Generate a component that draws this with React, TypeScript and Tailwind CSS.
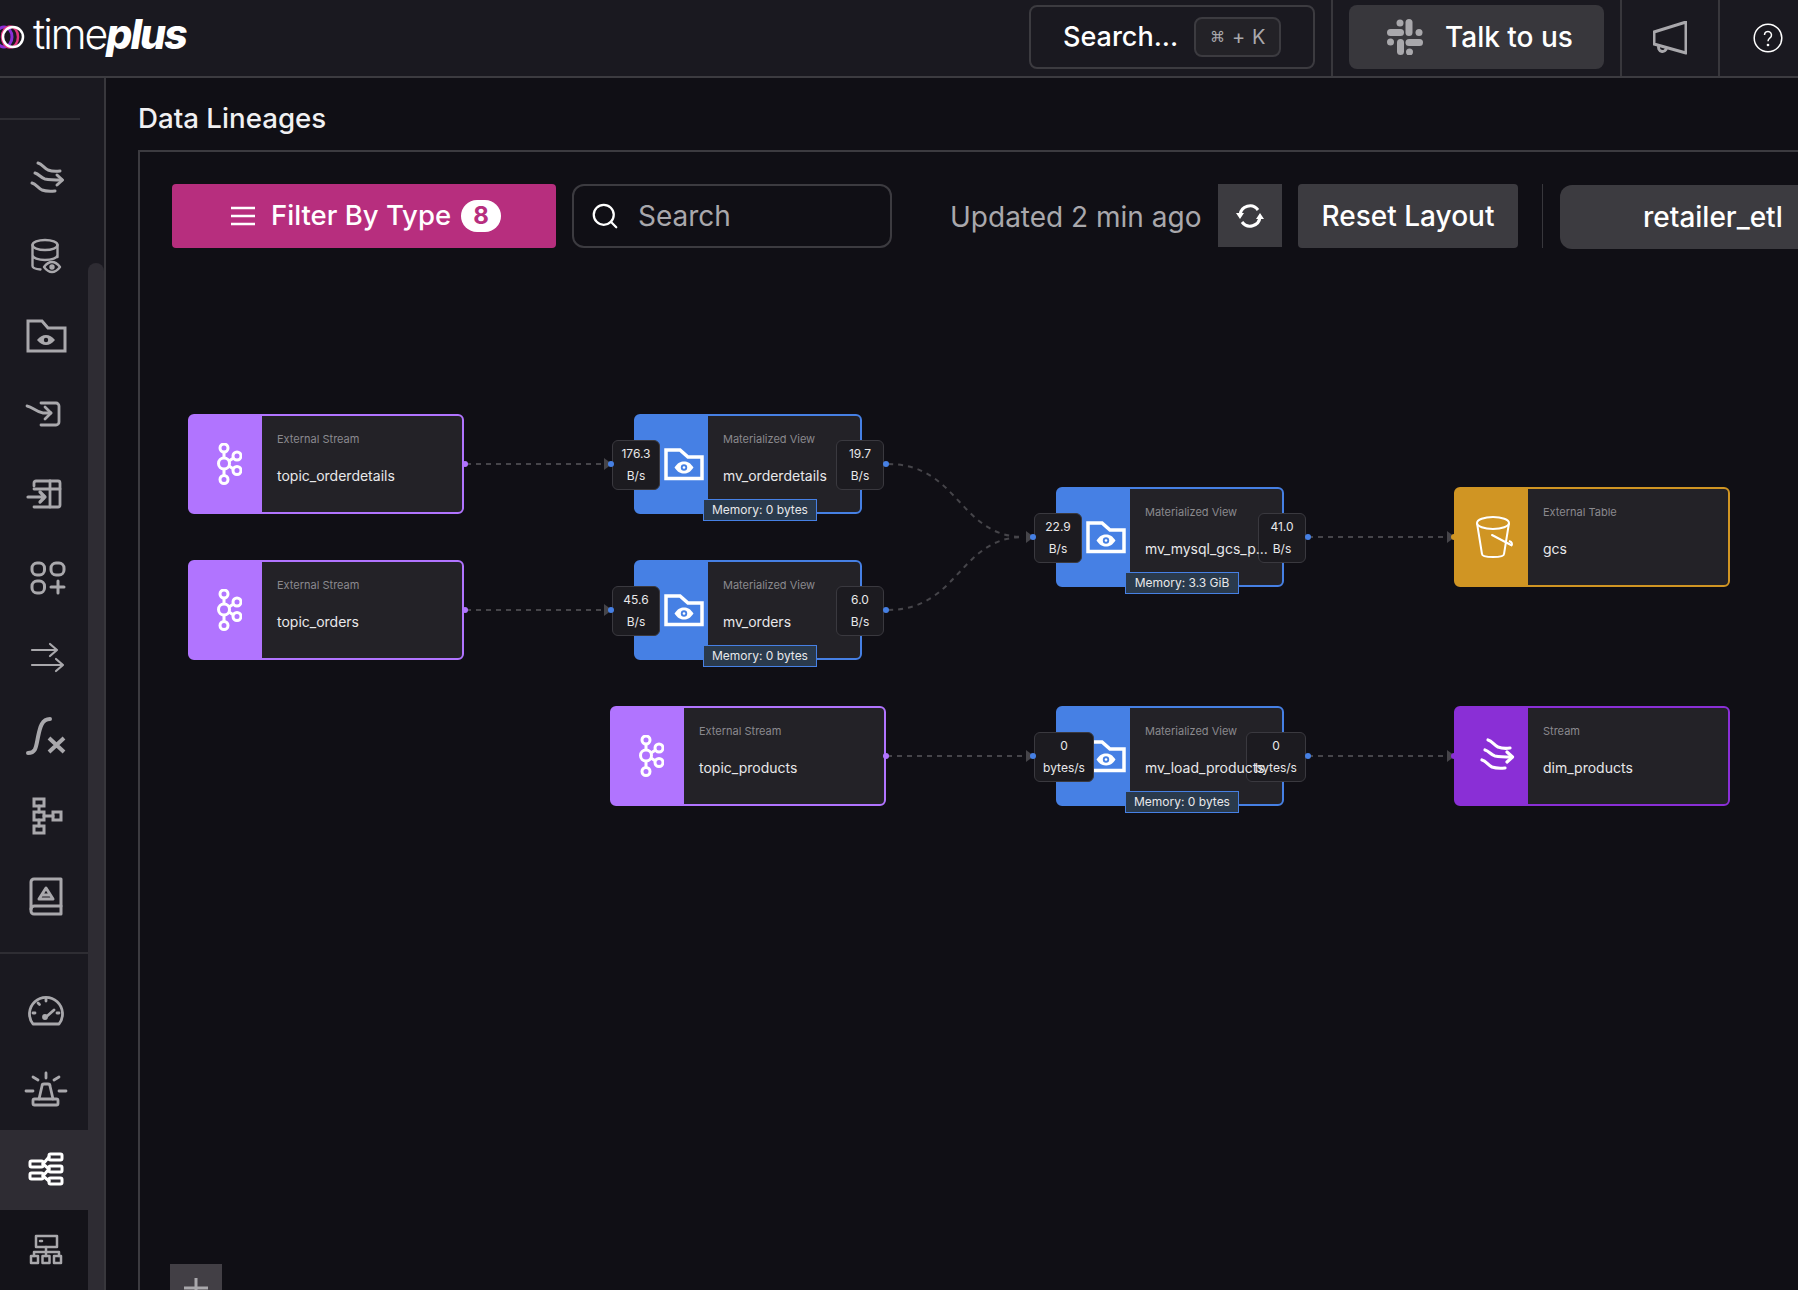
import React from "react";
import { Search } from "lucide-react";

const G = "#a9a8ac";

function SideIcon({ children, color = G, sw = 2.8 }: { children: React.ReactNode; color?: string; sw?: number }) {
  return (
    <svg width="44" height="44" viewBox="0 0 44 44" fill="none" stroke={color} strokeWidth={sw} strokeLinecap="round" strokeLinejoin="round">
      {children}
    </svg>
  );
}

const StreamPaths = () => (
  <>
    <path d="M14 7c4 1 6 5 10 7 4 1.500 8 1.500 12 1" />
    <path d="M11 17c4 1 6 5 10 6 5 1 10 1 17 1" />
    <path d="M33 19l5.500 5-5.500 5" />
    <path d="M8 27c4 1 6 5 10 7 4 1.500 8 1.500 13 1" />
  </>
);

const sideTop: React.ReactNode[] = [
  <SideIcon sw={3}><StreamPaths /></SideIcon>,
  <SideIcon sw={2.4}>
    <ellipse cx="21" cy="9" rx="12.500" ry="5" />
    <path d="M8.500 9v21c0 2 3 3 8 3.500M33.500 9v12M8.500 19c0 3 6 5 12.500 5s12.500-2 12.500-5" />
    <path d="M20 31c3-4 5.500-5 8-5s5 1 8 5c-3 4-5.500 5-8 5s-5-1-8-5z" />
    <circle cx="28" cy="31" r="1.500" fill={G} />
  </SideIcon>,
  <SideIcon sw={3}>
    <path d="M4 5h14l6 7h17v23H4z" strokeLinejoin="miter" />
    <path d="M13 24c3-3.500 5.500-5 9-5s6 1.500 9 5c-3 3.500-5.500 5-9 5s-6-1.500-9-5z" fill={G} stroke="none" />
    <circle cx="22" cy="24" r="2.200" fill="#1a1920" stroke="none" />
  </SideIcon>,
  <SideIcon>
    <path d="M3 10c6 1 9 6 16 7h8" />
    <path d="M21 11l6 6-6 6" />
    <path d="M17 7h15a3 3 0 0 1 3 3v16a3 3 0 0 1-3 3H17" />
  </SideIcon>,
  <SideIcon>
    <path d="M10 10V7a2 2 0 0 1 2-2h22a2 2 0 0 1 2 2v22a2 2 0 0 1-2 2H10" />
    <path d="M26 5v26M10 13h26" />
    <path d="M4 21h17M16 16l5 5-5 5" strokeWidth="3.200" />
  </SideIcon>,
  <SideIcon sw={3}>
    <rect x="8" y="7" width="12.500" height="12" rx="5" />
    <rect x="27" y="7" width="13" height="12" rx="5" />
    <rect x="8" y="25" width="12.500" height="12" rx="5" />
    <path d="M34 25v12M27 31h13" />
  </SideIcon>,
  <SideIcon sw={2.2}>
    <path d="M8 14h25M26 8l7 6-7 6" />
    <path d="M8 29h31M32 23l7 6-7 6" />
  </SideIcon>,
  <SideIcon sw={4}>
    <path d="M4 37c8 0 8-6 10-16s4-18 12-18" />
    <path d="M25 22l15 14M40 22L25 36" strokeLinecap="butt" />
  </SideIcon>,
  <SideIcon sw={3}>
    <rect x="10" y="3" width="10" height="7" strokeLinejoin="miter" />
    <rect x="10" y="16" width="10" height="8" strokeLinejoin="miter" />
    <rect x="10" y="30" width="10" height="7" strokeLinejoin="miter" />
    <rect x="29" y="16" width="8" height="8" strokeLinejoin="miter" />
    <path d="M15 10v6M15 24v6M20 20h9" />
  </SideIcon>,
  <SideIcon sw={3}>
    <path d="M10 3h27v35H10a3 3 0 0 1-3-3V6a3 3 0 0 1 3-3z" />
    <path d="M7 33a3.500 3.500 0 0 1 3.500-3H37" />
    <path d="M15 23l7-11 7 11zM18 19h8" />
  </SideIcon>,
];

const sideBottom: React.ReactNode[] = [
  <SideIcon>
    <path d="M9 36a16.500 16.500 0 1 1 26 0z" />
    <path d="M22 29l8-7" />
    <circle cx="21" cy="29" r="1.500" fill={G} />
    <path d="M9 25h2M33 25h2M14 15l1.500 1.500M22 11v2" />
  </SideIcon>,
  <SideIcon>
    <path d="M22 5v5M9 9l5 3M35 9l-5 3M2 23h7M35 23h7" />
    <path d="M15 31l3-13a2 2 0 0 1 2-2h4a2 2 0 0 1 2 2l3 13" />
    <rect x="9" y="31" width="25" height="6" rx="1.500" />
  </SideIcon>,
  <SideIcon color="#fff" sw={3}>
    <rect x="25" y="6" width="13" height="6" rx="1.500" />
    <rect x="25" y="18" width="13" height="6" rx="1.500" />
    <rect x="25" y="30" width="13" height="6" rx="1.500" />
    <rect x="6" y="13" width="13" height="6" rx="1.500" />
    <rect x="6" y="25" width="13" height="6" rx="1.500" />
    <path d="M19 16l6-7M19 16l6 5M19 28l6-7M19 28l6 5" />
  </SideIcon>,
  <SideIcon sw={2.500}>
    <rect x="12" y="8" width="21" height="11" />
    <path d="M22 19v5M10 28v-4h25v4M22 24v4" />
    <rect x="7" y="28" width="7" height="7" />
    <rect x="18.500" y="28" width="7" height="7" />
    <rect x="30" y="28" width="7" height="7" />
    <path d="M16 13h2" />
  </SideIcon>,
];

function Sidebar() {
  return (
    <aside className="relative flex w-[106px] shrink-0 flex-col overflow-hidden border-r-2 border-[#38373c] bg-[#1a1920] pt-10">
      <div className="mb-[18px] mr-[24px] h-[2px] shrink-0 bg-[#2e2d33]" />
      <div className="flex w-[88px] flex-col">
        {sideTop.map((ic, i) => (
          <div key={i} className="flex h-20 shrink-0 items-center justify-center pl-1">{ic}</div>
        ))}
      </div>
      <div className="mb-4 mt-[14px] mr-[16px] h-[2px] shrink-0 bg-[#2e2d33]" />
      <div className="flex w-[88px] flex-col">
        {sideBottom.map((ic, i) => (
          <div key={i} className={`flex h-20 shrink-0 items-center justify-center pl-1 ${i === 2 ? "bg-[#2e2c33]" : i === 3 ? "bg-[#141319]" : ""}`}>{ic}</div>
        ))}
      </div>
      <div className="absolute bottom-0 left-[88px] top-[185px] w-4 rounded-t-lg bg-[#2e2c33]" />
    </aside>
  );
}

function Header() {
  return (
    <header className="flex h-[78px] shrink-0 items-stretch border-b-2 border-[#3c3b40] bg-[#1a1920]">
      <div className="flex items-start pt-[2px]">
        <svg width="26" height="40" viewBox="0 0 26 40" fill="none" className="mt-[15px] shrink-0">
          <ellipse cx="4" cy="20" rx="8" ry="10" stroke="#8a2fd6" strokeWidth="3" />
          <ellipse cx="10" cy="20" rx="8" ry="10.500" stroke="#e0347f" strokeWidth="2.500" />
          <circle cx="13" cy="20" r="10" stroke="#fff" strokeWidth="2.500" />
        </svg>
        <div className="ml-[7px] flex font-[Inter,sans-serif] text-[41px] leading-[64px] text-white">
          <span className="font-light tracking-[-2px]">time</span>
          <span className="font-extrabold italic tracking-[-2px]">plus</span>
        </div>
      </div>
      <div className="ml-auto flex items-stretch">
        <div className="border-r-2 border-[#38373c] pr-4 pt-[5px]">
          <div className="flex h-16 w-[286px] items-center rounded-lg border-2 border-[#3c3b40] pl-[32px]">
            <span className="text-[27px] font-medium text-white">Search...</span>
            <span className="ml-4 flex h-10 w-[87px] items-center justify-center gap-[7px] rounded-lg border-2 border-[#3c3b40] bg-[#232227] text-[20px] text-[#a9a8ac]">
              <span className="font-['DejaVu_Sans'] text-[15px]">⌘</span><span>+</span><span>K</span>
            </span>
          </div>
        </div>
        <div className="border-r-2 border-[#38373c] px-4 pt-[5px]">
          <div className="flex h-16 w-[255px] items-center rounded-lg bg-[#38373c] pl-[38px]">
            <svg width="36" height="36" viewBox="0 0 36 36" fill={G} className="shrink-0">
              <circle cx="13" cy="4" r="3.500" />
              <rect x="18.500" y="0" width="7" height="17" rx="3.500" />
              <circle cx="32" cy="13.500" r="3.500" />
              <rect x="18.500" y="20" width="17.500" height="7" rx="3.500" />
              <circle cx="22.500" cy="33" r="3.500" />
              <rect x="10" y="20" width="7" height="16" rx="3.500" />
              <circle cx="3.500" cy="23" r="3.500" />
              <rect x="0" y="10" width="17" height="7" rx="3.500" />
            </svg>
            <span className="ml-[22px] text-[28px] font-medium text-white">Talk to us</span>
          </div>
        </div>
        <div className="flex w-[98px] items-center justify-center border-r-2 border-[#38373c]">
          <svg width="34" height="34" viewBox="0 0 34 34" fill="none" stroke={G} strokeWidth="3" strokeLinejoin="round">
            <path d="M1 11L33 1v31L1 23z" />
            <path d="M6 24.500a4 4 0 1 0 7.500 2" />
          </svg>
        </div>
        <div className="flex w-[78px] items-center justify-center pl-[18px]">
          <svg width="30" height="30" viewBox="0 0 30 30" fill="none" stroke="#fff" strokeWidth="1.500" className="shrink-0">
            <circle cx="15" cy="15" r="13.800" />
            <path d="M11.500 12a3.500 3.500 0 1 1 5.500 2.800c-1.300 1-2 1.700-2 3.400" />
            <circle cx="15" cy="22" r="0.600" fill="#fff" />
          </svg>
        </div>
      </div>
    </header>
  );
}

function Kafka() {
  return (
    <svg width="26" height="42" viewBox="0 0 26 42" fill="none" stroke="#fff" strokeWidth="3">
      <circle cx="8" cy="5" r="4" />
      <circle cx="8" cy="20.500" r="5.500" />
      <circle cx="8" cy="36.500" r="4" />
      <circle cx="21" cy="13" r="4" />
      <circle cx="21" cy="27.500" r="4" />
      <path d="M8 9v6M8 26v6.500M13 18l4.500-3M13 23l4.500 3" />
    </svg>
  );
}

function FolderEye() {
  return (
    <svg width="40" height="33" viewBox="0 0 40 33" fill="none" className="shrink-0">
      <path d="M2 2h14l8 7h14v21.500H2z" stroke="#fff" strokeWidth="3.500" />
      <path d="M10.500 19.500c3-4.500 6-6 9.500-6s6.500 1.500 9.500 6c-3 4.500-6 6-9.500 6s-6.500-1.500-9.500-6z" fill="#fff" />
      <circle cx="20" cy="19.500" r="3.200" fill="#4680e4" />
      <circle cx="20" cy="19.500" r="1.300" fill="#fff" />
    </svg>
  );
}

function Bucket() {
  return (
    <svg width="40" height="44" viewBox="0 0 40 44" fill="none" stroke="#fff" strokeWidth="2">
      <ellipse cx="18" cy="8" rx="16" ry="6" />
      <path d="M2 8l5 31c0 2 5 3 11 3s11-1 11-3l5-31" />
      <path d="M17 20l19 10" strokeLinecap="round" />
      <path d="M34 26c3 1 4 3 2 5" />
    </svg>
  );
}

function WhiteStream() {
  return (
    <svg width="38" height="38" viewBox="4 4 38 38" fill="none" stroke="#fff" strokeWidth="3.200" strokeLinecap="round" strokeLinejoin="round">
      <StreamPaths />
    </svg>
  );
}

function Badge({ top, bottom, side, wide }: { top: string; bottom: string; side: "l" | "r"; wide?: boolean }) {
  return (
    <div className={`absolute top-6 z-10 flex h-[50px] flex-col items-center justify-center rounded-md border border-[#3a393f] bg-[#1c1b20] text-[12px] leading-[22px] text-[#e8e8ea] ${wide ? "w-[60px]" : "w-[48px]"} ${side === "l" ? "left-[-24px]" : "right-[-24px]"}`}>
      <span>{top}</span>
      <span>{bottom}</span>
    </div>
  );
}

type NodeProps = {
  pos: string;
  w: string;
  border: string;
  panel: string;
  panelPad: string;
  icon: React.ReactNode;
  type: string;
  name: string;
  leftB?: [string, string];
  rightB?: [string, string];
  wide?: boolean;
  memory?: string;
  memPos?: string;
};

function Node({ pos, w, border, panel, panelPad, icon, type, name, leftB, rightB, wide, memory, memPos }: NodeProps) {
  return (
    <div className={`absolute flex h-[100px] rounded-md border-2 bg-[#232227] ${pos} ${w} ${border}`}>
      <div className={`flex h-full w-[72px] shrink-0 items-center justify-center ${panel} ${panelPad}`}>{icon}</div>
      <div className="relative z-20 flex min-w-0 flex-col pl-[15px] pt-[14px]">
        <span className="text-[11px] leading-[18px] text-[#8a898e]">{type}</span>
        <span className="mt-[18px] whitespace-nowrap text-[14px] leading-[20px] text-[#e8e8ea]">{name}</span>
      </div>
      {leftB && <Badge top={leftB[0]} bottom={leftB[1]} side="l" wide={wide} />}
      {rightB && <Badge top={rightB[0]} bottom={rightB[1]} side="r" wide={wide} />}
      {memory && (
        <div className={`absolute bottom-[-9px] z-10 flex h-[22px] w-[114px] items-center justify-center border border-[#4680e4] bg-[#2a3a4c] text-[12px] text-[#e8e8ea] ${memPos}`}>
          {memory}
        </div>
      )}
    </div>
  );
}

const PURPLE = { border: "border-[#b174ff]", panel: "bg-[#b174ff]" };
const BLUE = { border: "border-[#4680e4]", panel: "bg-[#4680e4]" };

const edges = [
  "M466 464H604",
  "M466 610H604",
  "M888 464C959 464 959 537 1024 537",
  "M888 610C959 610 959 537 1024 537",
  "M1308 537H1446",
  "M887 756H1026",
  "M1308 756H1446",
];
const arrows = [[610, 464], [610, 610], [1032, 537], [1032, 756], [1453, 537], [1453, 756]];
const dots: [number, number, string][] = [
  [465, 464, "#b174ff"], [465, 610, "#b174ff"], [886, 756, "#b174ff"],
  [611, 464, "#4680e4"], [611, 610, "#4680e4"],
  [886, 464, "#4680e4"], [886, 610, "#4680e4"],
  [1033, 537, "#4680e4"], [1033, 756, "#4680e4"],
  [1308, 537, "#4680e4"], [1308, 756, "#4680e4"],
  [1454, 537, "#d09523"], [1454, 756, "#8a2fd6"],
];

function Canvas() {
  return (
    <div className="relative flex-1 border-l-2 border-t-2 border-[#3c3b40]">
      <div className="flex h-16 items-start pl-8 pt-8 box-content">
        <button className="flex h-16 w-[384px] shrink-0 items-center rounded bg-[#b72e7e] pl-[59px] text-[27.5px] font-medium text-white">
          <svg width="24" height="20" viewBox="0 0 24 20" stroke="#fff" strokeWidth="2.400" className="shrink-0">
            <path d="M0 2h24M0 10h24M0 18h24" />
          </svg>
          <span className="ml-4">Filter By Type</span>
          <span className="ml-[10px] flex h-8 w-10 items-center justify-center rounded-[16px] bg-white text-[24px] font-bold text-[#b72e7e]">8</span>
        </button>
        <div className="ml-4 flex h-16 w-[320px] shrink-0 items-center rounded-xl border-2 border-[#3c3b40] pl-4">
          <Search size={30} color="#fff" strokeWidth={1.800} />
          <span className="ml-[18px] text-[28px] text-[#a9a8ac]">Search</span>
        </div>
        <span className="ml-[58px] h-16 w-[252px] shrink-0 whitespace-nowrap text-[28px] leading-[66px] text-[#a9a8ac]">Updated 2 min ago</span>
        <div className="ml-[16px] flex h-[63px] w-16 shrink-0 items-center justify-center bg-[#3c3b40]">
          <svg width="28" height="28" viewBox="0 0 28 28" fill="none" stroke="#fff" strokeWidth="3">
            <path d="M4 13a10 10 0 0 1 18-5" />
            <path d="M24 15a10 10 0 0 1-18 5" />
            <path d="M0 11h8l-4 6zM28 17h-8l4-6z" fill="#fff" stroke="none" />
          </svg>
        </div>
        <button className="ml-4 flex h-16 w-[220px] shrink-0 items-center justify-center rounded bg-[#3c3b40] text-[28px] font-medium text-white">Reset Layout</button>
        <div className="ml-[24px] h-16 w-px shrink-0 bg-[#38373c]" />
        <div className="ml-[17px] mt-px flex h-16 w-[260px] shrink-0 items-center rounded-t-xl rounded-b-xl bg-[#3c3b40] pl-[83px] text-[28px] font-medium text-white">
          retailer_etl
        </div>
      </div>

      <svg className="absolute left-0 top-0" width="1658" height="1138" viewBox="140 152 1658 1138" fill="none">
        {edges.map((d, i) => (
          <path key={i} d={d} stroke="#46454a" strokeWidth="2" strokeDasharray="5 5" />
        ))}
        {arrows.map(([x, y], i) => (
          <path key={i} d={`M${x - 6} ${y - 6}L${x + 2} ${y}L${x - 6} ${y + 6}z`} fill="#46454a" />
        ))}
      </svg>

      <Node pos="left-[48px] top-[262px]" w="w-[276px]" {...PURPLE} panelPad="pl-[6px]" icon={<Kafka />} type="External Stream" name="topic_orderdetails" />
      <Node pos="left-[48px] top-[408px]" w="w-[276px]" {...PURPLE} panelPad="pl-[6px]" icon={<Kafka />} type="External Stream" name="topic_orders" />
      <Node pos="left-[470px] top-[554px]" w="w-[276px]" {...PURPLE} panelPad="pl-[6px]" icon={<Kafka />} type="External Stream" name="topic_products" />

      <Node pos="left-[494px] top-[262px]" w="w-[228px]" {...BLUE} panelPad="pl-[24px]" icon={<FolderEye />} type="Materialized View" name="mv_orderdetails" leftB={["176.3", "B/s"]} rightB={["19.7", "B/s"]} memory="Memory: 0 bytes" memPos="left-[67px]" />
      <Node pos="left-[494px] top-[408px]" w="w-[228px]" {...BLUE} panelPad="pl-[24px]" icon={<FolderEye />} type="Materialized View" name="mv_orders" leftB={["45.6", "B/s"]} rightB={["6.0", "B/s"]} memory="Memory: 0 bytes" memPos="left-[67px]" />
      <Node pos="left-[916px] top-[335px]" w="w-[228px]" {...BLUE} panelPad="pl-[24px]" icon={<FolderEye />} type="Materialized View" name="mv_mysql_gcs_p..." leftB={["22.9", "B/s"]} rightB={["41.0", "B/s"]} memory="Memory: 3.3 GiB" memPos="left-[67px]" />
      <Node pos="left-[916px] top-[554px]" w="w-[228px]" {...BLUE} panelPad="pl-[24px]" icon={<FolderEye />} type="Materialized View" name="mv_load_products" leftB={["0", "bytes/s"]} rightB={["0", "bytes/s"]} wide memory="Memory: 0 bytes" memPos="left-[67px]" />

      <Node pos="left-[1314px] top-[335px]" w="w-[276px]" border="border-[#d09523]" panel="bg-[#d09523]" panelPad="pl-[6px]" icon={<Bucket />} type="External Table" name="gcs" />
      <Node pos="left-[1314px] top-[554px]" w="w-[276px]" border="border-[#8a2fd6]" panel="bg-[#8a2fd6]" panelPad="pl-[10px]" icon={<WhiteStream />} type="Stream" name="dim_products" />

      <svg className="absolute left-0 top-0 z-20" width="1658" height="1138" viewBox="140 152 1658 1138" fill="none">
        {dots.map(([x, y, c], i) => (
          <circle key={i} cx={x} cy={y} r="3" fill={c} />
        ))}
      </svg>

      <div className="absolute bottom-0 left-[30px] flex h-[26px] w-[52px] justify-center overflow-hidden bg-[#423f45] pt-[14px]">
        <svg width="24" height="24" viewBox="0 0 24 24" stroke={G} strokeWidth="3" className="shrink-0">
          <path d="M12 0v24M0 10h24" />
        </svg>
      </div>
    </div>
  );
}

export default function App() {
  return (
    <div className="flex h-[1290px] w-[1798px] flex-col overflow-hidden bg-[#100f15] font-[Inter,sans-serif]">
      <Header />
      <div className="flex min-h-0 flex-1">
        <Sidebar />
        <main className="flex min-w-0 flex-1 flex-col pl-8">
          <div className="flex h-[72px] shrink-0 items-center pt-[10px]">
            <h1 className="text-[27.7px] font-medium text-[#f0f0f2]">Data Lineages</h1>
          </div>
          <Canvas />
        </main>
      </div>
    </div>
  );
}
